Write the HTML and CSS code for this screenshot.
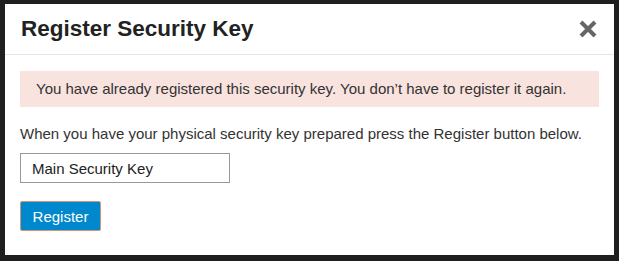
FILE: index.html
```html
<!DOCTYPE html>
<html>
<head>
<meta charset="utf-8">
<link rel="stylesheet" href="styles.css">
</head>
<body>
<div class="modal">
  <div class="modal-header">
    <h3 class="modal-title">Register Security Key</h3>
    <button class="close" aria-label="Close">
      <svg width="18" height="18" viewBox="0 0 18 18"><path d="M2 2 L16 16 M16 2 L2 16" stroke="#666" stroke-width="4" stroke-linecap="butt"/></svg>
    </button>
  </div>
  <div class="modal-body">
    <div class="alert">You have already registered this security key. You don’t have to register it again.</div>
    <p class="hint">When you have your physical security key prepared press the Register button below.</p>
    <input class="field" type="text" value="Main Security Key">
    <div class="actions"><button class="btn">Register</button></div>
  </div>
</div>
</body>
</html>
```
FILE: styles.css
```css
html, body {
  margin: 0;
  padding: 0;
  background: #1f1f1f;
  font-family: "Liberation Sans", Arial, sans-serif;
  color: #333;
}
body {
  padding: 4px 5px;
}
.modal {
  width: 609px;
  height: 251px;
  background: #fff;
  box-sizing: border-box;
}
.modal-header {
  display: flex;
  align-items: center;
  justify-content: space-between;
  padding: 13px 17px 13px 16px;
  border-bottom: 1px solid #e5e5e5;
}
.modal-title {
  margin: 0;
  font-size: 22.5px;
  line-height: 24px;
  font-weight: bold;
  color: #222;
}
.close {
  border: 0;
  background: none;
  padding: 0;
  width: 18px;
  height: 18px;
  display: flex;
}
.modal-body {
  padding: 16px 15px 25px 15px;
}
.alert {
  background: #f9e3df;
  padding: 9px 16px;
  font-size: 15px;
  line-height: 18px;
  color: #333;
}
.hint {
  margin: 18px 0 10px;
  font-size: 15px;
  line-height: 18px;
}
.field {
  display: block;
  width: 210px;
  height: 30px;
  box-sizing: border-box;
  border: 1px solid #999;
  padding: 0 11px;
  font-family: "Liberation Sans", Arial, sans-serif;
  font-size: 15px;
  color: #222;
  margin: 0;
}
.actions {
  margin-top: 18px;
  display: flex;
}
.btn {
  width: 81px;
  height: 30px;
  box-sizing: border-box;
  background: #0088cc;
  border: 1px solid #d9937a;
  border-radius: 2px;
  color: #fff;
  font-family: "Liberation Sans", Arial, sans-serif;
  font-size: 15px;
  padding: 0;
}
```
